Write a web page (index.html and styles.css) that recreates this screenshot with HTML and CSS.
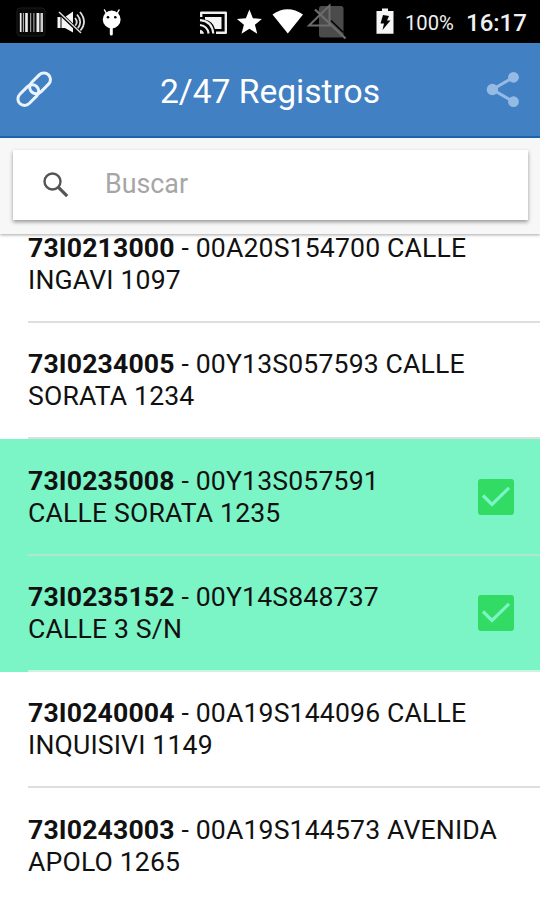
FILE: index.html
```
<!DOCTYPE html>
<html lang="es">
<head>
  <meta charset="UTF-8">
  <meta name="viewport" content="width=device-width, initial-scale=1.0">
  <title>Registros</title>
  <link rel="stylesheet" href="styles.css">
</head>
<body>

  <div class="status-bar">
    <div class="status-left">
      <!-- barcode -->
      <svg width="30" height="43" viewBox="16 0 30 43">
        <rect x="17" y="8" width="28" height="28" rx="3" fill="#090909" stroke="#1c1c1c"/>
        <path d="M20.7 13v19M42 13v19" stroke="#eee" stroke-width="1.7"/>
        <path d="M26.5 13v19M37.8 13v19" stroke="#eee" stroke-width="2.6"/>
        <path d="M30.7 13v19M33.9 13v19M23.4 13v19M40.1 13v19" stroke="#bbb" stroke-width="1"/>
      </svg>
      <!-- muted speaker -->
      <svg width="30" height="43" viewBox="56 0 30 43">
        <path d="M57.5 17h3v11h-3zM61.5 17H65l8-5.5v21L65 28h-3.5z" fill="#f5f5f5"/>
        <path d="M75 18q3.5 4 0 8M77 14.5q6.5 7.5 0 15M80 12q8 10 0 19" fill="none" stroke="#ddd" stroke-width="1.8"/>
        <path d="M58 11.5l22 21" stroke="#000" stroke-width="3.5"/>
        <path d="M59 12l22 21" stroke="#ddd" stroke-width="1.5"/>
      </svg>
      <!-- debug robot -->
      <svg class="robot" width="20" height="43" viewBox="102 0 20 43">
        <circle cx="111.7" cy="19.5" r="8.9" fill="#fff"/>
        <path d="M106.5 13.5l-2-3.5M117 13.5l2-3.5" stroke="#fff" stroke-width="1.5" stroke-linecap="round"/>
        <path d="M111.3 27v7" stroke="#fff" stroke-width="3" stroke-linecap="round"/>
        <circle cx="108" cy="17.2" r="1.3" fill="#000"/>
        <circle cx="115.3" cy="17.2" r="1.3" fill="#000"/>
      </svg>
    </div>
    <div class="status-right">
      <!-- cast -->
      <svg width="29" height="43" viewBox="199 0 29 43">
        <path d="M201.2 17v-4.3h24.6v20H216" fill="none" stroke="#eee" stroke-width="2.4" stroke-linejoin="round"/>
        <path d="M205 17h16.5v12H215q-2-8-10-9.5z" fill="#f5f5f5"/>
        <path d="M200 20.2q12 1 13.3 13.3M200 25q7.5 1 8.6 8.5" fill="none" stroke="#eee" stroke-width="2.2"/>
        <path d="M200 29.8q3.3.6 4 4h-4z" fill="#eee"/>
      </svg>
      <!-- star -->
      <svg class="star" width="26" height="43" viewBox="236 0 26 43">
        <path d="M249.4 9.6l3.5 8.7 9 .6-7 5.9 2.4 9-7.9-5-7.9 5 2.4-9-7-5.9 9-.6z" fill="#fff"/>
      </svg>
      <!-- wifi -->
      <svg class="wifi" width="31" height="43" viewBox="272 0 31 43">
        <path d="M272.5 14.5q15-10.5 30.500 0L287.8 33.5z" fill="#fff"/>
      </svg>
      <!-- no signal -->
      <svg class="signal" width="42" height="43" viewBox="306 0 42 43">
        <rect x="319" y="6" width="24.5" height="31.5" rx="2.5" fill="#4b4b4b"/>
        <path d="M309 25.5L329.5 5.500v20z" fill="none" stroke="#6c6c6c" stroke-width="2"/>
        <path d="M331 20.5l12.5 12" stroke="#000" stroke-width="1.5"/>
        <path d="M315 9.5l30.5 29" stroke="#6c6c6c" stroke-width="2.4"/>
      </svg>
      <!-- battery -->
      <svg class="battery" width="18" height="43" viewBox="376 0 18 43">
        <path d="M382 8.5h6V11h5.500v22.700h-17V11h5.500z" fill="#f5f5f5"/>
        <path d="M383 15l6 1-2 4.5h3.500L382.5 30l1.5-6.500h-3.500z" fill="#000"/>
      </svg>
      <span class="percent">100%</span>
      <span class="clock">16:17</span>
    </div>
  </div>

  <header class="toolbar">
    <!-- link -->
    <svg width="40" height="40" viewBox="14 69 40 40">
      <g transform="translate(34.2 88.2) rotate(-45)" fill="none" stroke="#e8f3ff" stroke-width="3">
        <rect x="-20.3" y="-6.6" width="24" height="13.2" rx="6.6"/>
        <rect x="-3.7" y="-6.6" width="24" height="13.2" rx="6.6"/>
      </g>
    </svg>
    <h1 class="title">2/47 Registros</h1>
    <!-- share -->
    <svg width="40" height="40" viewBox="483 69 40 40">
      <path d="M513.5 76.3L492.5 88.5L513.5 100.7" fill="none" stroke="#95bae3" stroke-width="3"/>
      <g fill="#95bae3">
        <circle cx="513.5" cy="76.3" r="5.4"/>
        <circle cx="492.4" cy="88.5" r="5.7"/>
        <circle cx="513.5" cy="100.7" r="5.4"/>
      </g>
    </svg>
  </header>

  <div class="search-bar">
    <div class="search-box">
      <svg width="26" height="26" viewBox="0 0 26 26" fill="none" stroke="#555">
        <circle cx="9.5" cy="9.5" r="8" stroke-width="2.4"/>
        <path d="M15.2 15.2l9 9" stroke-width="3.2"/>
      </svg>
      <span class="placeholder">Buscar</span>
    </div>
  </div>

  <ul class="list">
    <li class="item">
      <p class="label"><b>73I0213000</b> - 00A20S154700 CALLE<br>INGAVI 1097</p>
    </li>
    <li class="item">
      <p class="label"><b>73I0234005</b> - 00Y13S057593 CALLE<br>SORATA 1234</p>
    </li>
    <li class="item selected">
      <p class="label"><b>73I0235008</b> - 00Y13S057591<br>CALLE SORATA 1235</p>
      <svg class="check" width="36" height="36" viewBox="0 0 36 36">
        <rect width="36" height="36" rx="3" fill="#32db64"/>
        <path d="M5 16.5l9 9L31 8.8" fill="none" stroke="#7cf5c6" stroke-width="3.2"/>
      </svg>
    </li>
    <li class="item selected">
      <p class="label"><b>73I0235152</b> - 00Y14S848737<br>CALLE 3 S/N</p>
      <svg class="check" width="36" height="36" viewBox="0 0 36 36">
        <rect width="36" height="36" rx="3" fill="#32db64"/>
        <path d="M5 16.5l9 9L31 8.8" fill="none" stroke="#7cf5c6" stroke-width="3.2"/>
      </svg>
    </li>
    <li class="item">
      <p class="label"><b>73I0240004</b> - 00A19S144096 CALLE<br>INQUISIVI 1149</p>
    </li>
    <li class="item">
      <p class="label"><b>73I0243003</b> - 00A19S144573 AVENIDA<br>APOLO 1265</p>
    </li>
  </ul>

</body>
</html>
```

FILE: styles.css
```
* {
  box-sizing: border-box;
}
body {
  margin: 0;
  height: 900px;
  overflow: hidden;
  background: #fff;
  color: #111;
  font-family: Roboto, sans-serif;
}
svg {
  display: block;
  flex: none;
}

/* Status bar */
.status-bar {
  display: flex;
  justify-content: space-between;
  height: 43px;
  padding: 0 14px 0 16px;
  background: #000;
  color: #f0f0f0;
}
.status-left,
.status-right {
  display: flex;
  align-items: center;
}
.status-left {
  gap: 10px;
}
.robot {
  margin-left: 6px;
}
.star {
  margin-left: 8px;
}
.wifi {
  margin-left: 10px;
}
.signal {
  margin-left: 3px;
}
.battery {
  margin-left: 28px;
}
.percent {
  width: 49px;
  margin-left: 11px;
  padding-top: 3px;
  font-size: 20.2px;
  white-space: nowrap;
}
.clock {
  width: 60px;
  margin-left: 12px;
  padding-top: 3px;
  font-size: 24px;
  font-weight: 500;
  white-space: nowrap;
}

/* Toolbar */
.toolbar {
  display: flex;
  align-items: center;
  justify-content: space-between;
  height: 95px;
  padding: 0 17px 0 14px;
  background: #4280c4;
  border-bottom: 2px solid #1e68b2;
}
.title {
  margin: 5px 0 0 3px;
  color: #fff;
  font-size: 33.6px;
  font-weight: 400;
  line-height: 40px;
  white-space: nowrap;
}

/* Search */
.search-bar {
  position: relative;
  z-index: 1;
  height: 96px;
  padding: 12px 12px 14px 13px;
  background: #f7f7f7;
  box-shadow: 0 1px 3px rgba(0, 0, 0, 0.35);
}
.search-box {
  display: flex;
  align-items: center;
  height: 70px;
  padding-left: 30px;
  background: #fff;
  box-shadow: 0 2px 4px rgba(0, 0, 0, 0.4);
}
.placeholder {
  margin: 0 0 3px 36px;
  color: #a6a6a6;
  font-size: 26.8px;
}

/* The list is scrolled, its first row starts behind the search bar */
.list {
  margin: -27.6px 0 0;
  padding: 0;
  list-style: none;
}
.item {
  display: flex;
  align-items: center;
  height: 116.4px;
  padding: 0 26.5px 1.6px 28px;
  background: linear-gradient(#dedede, #dedede) 28px 100% / 100% 2px no-repeat;
}
.item.selected {
  background-color: #7cf5c6;
  background-image: linear-gradient(#afe8cf, #afe8cf);
}
.selected + .item.selected {
  background-image: linear-gradient(#c9f3e2, #c9f3e2);
}
.item:last-child {
  background: none;
}
.label {
  flex: 1;
  margin: 0;
  font-size: 26.6px;
  letter-spacing: 0.16px;
  line-height: 32px;
}
.check {
  margin-top: 1px;
}
```
